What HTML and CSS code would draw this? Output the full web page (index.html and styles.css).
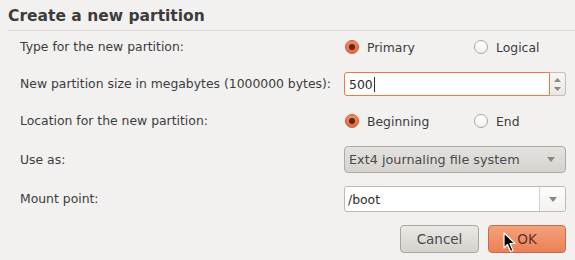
FILE: index.html
```html
<!DOCTYPE html>
<html lang="en">
<head>
    <meta charset="UTF-8">
    <title>Create a new partition</title>
    <link rel="stylesheet" href="styles.css">
</head>
<body>
    <div class="dialog">
        <h1 class="title">Create a new partition</h1>
        <div class="form">
            <label class="lbl">Type for the new partition:</label>
            <div class="radios">
                <span class="radio on"><i></i>Primary</span>
                <span class="radio"><i></i>Logical</span>
            </div>

            <label class="lbl">New partition size in megabytes (1000000 bytes):</label>
            <div class="spin">
                <span class="spin-val">500<b class="caret"></b></span>
                <span class="spin-btns">
                    <svg width="7" height="4" viewBox="0 0 7 4"><path d="M0 4 L3.5 0 L7 4Z" fill="#8a8782"/></svg>
                    <svg width="7" height="4" viewBox="0 0 7 4"><path d="M0 0 L3.5 4 L7 0Z" fill="#8a8782"/></svg>
                </span>
            </div>

            <label class="lbl">Location for the new partition:</label>
            <div class="radios">
                <span class="radio on"><i></i>Beginning</span>
                <span class="radio"><i></i>End</span>
            </div>

            <label class="lbl">Use as:</label>
            <div class="combo">
                <span>Ext4 journaling file system</span>
                <svg width="8" height="5" viewBox="0 0 8 5"><path d="M0 0 L4 5 L8 0Z" fill="#8a8782"/></svg>
            </div>

            <label class="lbl">Mount point:</label>
            <div class="entry">
                <span class="entry-val">/boot</span>
                <span class="entry-btn">
                    <svg width="8" height="5" viewBox="0 0 8 5"><path d="M0 0 L4 5 L8 0Z" fill="#8a8782"/></svg>
                </span>
            </div>
        </div>
        <div class="actions">
            <button class="btn">Cancel</button>
            <button class="btn ok">OK</button>
        </div>
        <svg class="cursor" width="13" height="21" viewBox="0 0 13 21">
            <path d="M1 1 L1 16 L4.5 12.5 L7.5 19.5 L10 18.5 L7 11.5 L12 11.5 Z" fill="#000" stroke="#fff" stroke-width="1.2" stroke-linejoin="round"/>
        </svg>
    </div>
</body>
</html>
```

FILE: styles.css
```css
*{
    margin: 0;
    padding: 0;
    box-sizing: border-box;
}
html, body{
    background-color: #f2f1f0;
}
body{
    font-family: "DejaVu Sans", sans-serif;
    font-size: 12.4px;
    color: #3c3c3c;
}
.dialog{
    position: relative;
    width: 575px;
    height: 260px;
}
.title{
    margin-left: 8px;
    padding-top: 6px;
    height: 31px;
    font-size: 15.5px;
    line-height: 20px;
    font-weight: bold;
    color: #3c3c3c;
    border-bottom: 1px solid #dedbd6;
}
.form{
    display: grid;
    grid-template-columns: 324px 222px;
    grid-template-rows: 24px 24px 24px 27px 26px;
    row-gap: 13px;
    padding: 4px 0 0 20px;
    align-items: center;
}
.lbl{
    line-height: 16px;
}
.radios{
    display: flex;
    align-items: center;
}
.radio{
    display: flex;
    align-items: center;
    flex: none;
    padding-left: 1px;
}
.radio:first-child{
    width: 129px;
}
.radio i{
    display: inline-block;
    width: 14px;
    height: 14px;
    margin-right: 8px;
    border-radius: 50%;
    border: 1px solid #a9a59f;
    background: linear-gradient(#ffffff, #f1f0ee);
    position: relative;
}
.radio.on i{
    border-color: #c9592f;
    background: linear-gradient(#f58a5e, #e8693c);
}
.radio.on i::after{
    content: "";
    position: absolute;
    left: 3px;
    top: 3px;
    width: 6px;
    height: 6px;
    border-radius: 50%;
    background: #5b2817;
}
.spin{
    display: flex;
    height: 24px;
}
.spin-val{
    flex: 1;
    display: flex;
    align-items: center;
    padding-left: 4px;
    background: #fff;
    border: 1px solid #f07746;
    border-radius: 3px 0 0 3px;
    color: #2c2c2c;
}
.caret{
    display: inline-block;
    width: 1px;
    height: 15px;
    background: #2c2c2c;
    margin-left: 1px;
}
.spin-btns{
    width: 16px;
    display: flex;
    flex-direction: column;
    align-items: center;
    justify-content: center;
    gap: 5px;
    border: 1px solid #c1bdb8;
    border-left: none;
    border-radius: 0 3px 3px 0;
    background: linear-gradient(#f8f7f6, #e9e7e4);
}
.combo{
    height: 27px;
    display: flex;
    align-items: center;
    justify-content: space-between;
    padding: 0 10px 0 4px;
    border: 1px solid #aeaaa4;
    border-radius: 4px;
    background: linear-gradient(#e4e2df, #d6d3cf);
    color: #4a4a4a;
    font-size: 12.8px;
}
.entry{
    height: 26px;
    display: flex;
    border: 1px solid #bdb9b3;
    border-radius: 3px;
    background: #fff;
}
.entry-val{
    flex: 1;
    display: flex;
    align-items: center;
    padding-left: 3px;
    color: #2c2c2c;
}
.entry-btn{
    width: 26px;
    display: flex;
    align-items: center;
    justify-content: center;
    border-left: 1px solid #d6d3cf;
    background: linear-gradient(#fdfdfc, #f3f2f0);
    border-radius: 0 3px 3px 0;
}
.actions{
    display: flex;
    justify-content: flex-end;
    gap: 9px;
    padding: 13px 9px 0 0;
}
.btn{
    width: 79px;
    height: 28px;
    font-family: "DejaVu Sans", sans-serif;
    font-size: 13.5px;
    color: #4a4a4a;
    border: 1px solid #a9a59f;
    border-radius: 4px;
    background: linear-gradient(#ebe9e6, #d5d2cd);
}
.btn.ok{
    width: 78px;
    border-color: #c8694a;
    background: linear-gradient(#f5a17b, #ec8058);
    color: #5a3528;
}
.cursor{
    position: absolute;
    left: 503px;
    top: 232px;
}
```
